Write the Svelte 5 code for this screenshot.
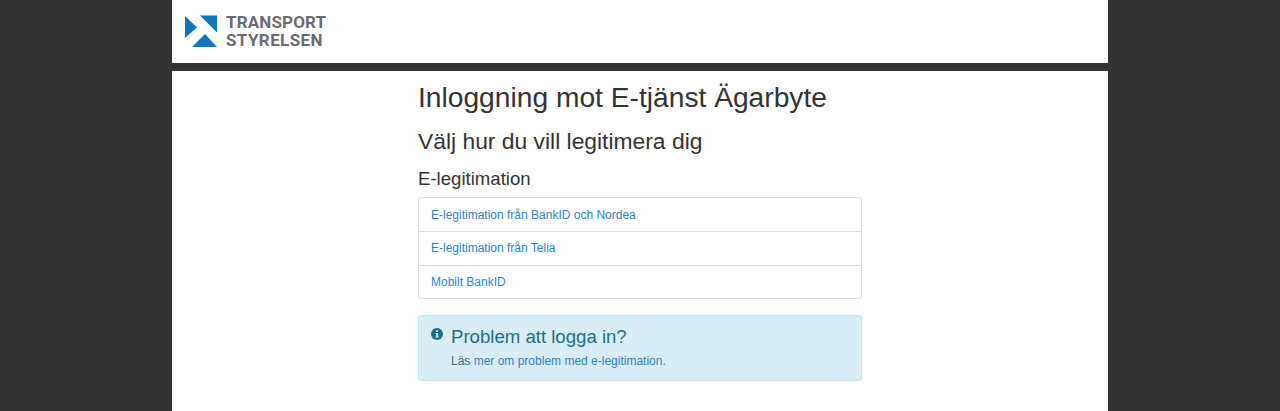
<script>
  const methods = [
    "E-legitimation från BankID och Nordea",
    "E-legitimation från Telia",
    "Mobilt BankID",
  ];
</script>

<div class="page">
  <header class="header">
    <svg class="mark" viewBox="0 0 34 34" width="34" height="34" aria-hidden="true">
      <polygon points="0,1 12,12.5 0,23" fill="#0f76bc" />
      <polygon points="15,0.5 32,0.5 32,17.5" fill="#0f76bc" />
      <polygon points="7,32 20,19 32,32" fill="#0f76bc" />
    </svg>
    <div class="wordmark">
      <span>TRANSPORT</span>
      <span>STYRELSEN</span>
    </div>
  </header>

  <main class="main">
    <div class="content">
      <h1>Inloggning mot E-tjänst Ägarbyte</h1>
      <h2>Välj hur du vill legitimera dig</h2>
      <h3>E-legitimation</h3>

      <div class="list">
        {#each methods as method}
          <a class="item" href="#top">{method}</a>
        {/each}
      </div>

      <div class="alert">
        <svg class="info" viewBox="0 0 12 12" width="12" height="12" aria-hidden="true">
          <circle cx="6" cy="6" r="6" fill="#1c6c8c" />
          <rect x="5" y="2.2" width="2" height="1.8" fill="#d9edf7" />
          <path d="M4.4 5h2.7v3.4h.7v1H4.4v-1h.8V6h-.8z" fill="#d9edf7" />
        </svg>
        <div>
          <h4>Problem att logga in?</h4>
          <p>Läs <a href="#top">mer om problem med e-legitimation</a>.</p>
        </div>
      </div>
    </div>
  </main>
</div>

<style>
  :global(body) {
    margin: 0;
    background: #333333;
  }

  .page {
    width: 936px;
    height: 411px;
    margin: 0 auto;
    display: flex;
    flex-direction: column;
    gap: 8px;
    overflow: hidden;
    font-family: "Liberation Sans", Arial, sans-serif;
    color: #333333;
  }

  .header {
    height: 63px;
    flex: none;
    box-sizing: border-box;
    background: #ffffff;
    padding: 15px 0 0 13px;
    display: flex;
    align-items: flex-start;
    gap: 7px;
  }

  .mark {
    flex: none;
  }

  .wordmark {
    display: flex;
    flex-direction: column;
    margin-top: -1px;
    font-family: Roboto, "Liberation Sans", sans-serif;
    font-size: 17px;
    font-weight: 700;
    line-height: 17.6px;
    letter-spacing: 0.15px;
    color: #6b6c6e;
  }

  .wordmark span:last-child {
    letter-spacing: 0.4px;
  }

  .main {
    flex: 1;
    background: #ffffff;
    display: flex;
    justify-content: center;
  }

  .content {
    width: 444px;
  }

  h1 {
    margin: 8px 0 0;
    font-size: 28.2px;
    font-weight: 400;
    line-height: 36px;
  }

  h2 {
    margin: 11px 0 0;
    font-size: 22.85px;
    font-weight: 400;
    line-height: 30px;
  }

  h3 {
    margin: 11px 0 0;
    font-size: 18.6px;
    font-weight: 400;
    line-height: 24px;
  }

  .list {
    margin-top: 6px;
    box-sizing: border-box;
    height: 102px;
    border: 1px solid #e0e0e0;
    border-radius: 3px;
    display: flex;
    flex-direction: column;
  }

  .item {
    flex: 1;
    padding-left: 12px;
    display: flex;
    align-items: center;
    font-size: 12px;
    color: #2a84c8;
    text-decoration: none;
    border-top: 1px solid #e0e0e0;
  }

  .item:first-child {
    border-top: 0;
    padding-top: 1px;
  }

  .alert {
    margin-top: 16px;
    height: 66px;
    box-sizing: border-box;
    padding: 12px 12px 0;
    display: flex;
    gap: 8px;
    background: #d9edf7;
    border: 1px solid #bce8f1;
    border-radius: 3px;
    color: #2a6f8e;
  }

  .info {
    flex: none;
  }

  h4 {
    margin: -3px 0 0;
    font-size: 18.6px;
    font-weight: 400;
    line-height: 24px;
    color: #1f6d8c;
  }

  p {
    margin: 4px 0 0;
    font-size: 12px;
    line-height: 16px;
  }

  p a {
    color: #2a84c8;
    text-decoration: none;
  }
</style>
